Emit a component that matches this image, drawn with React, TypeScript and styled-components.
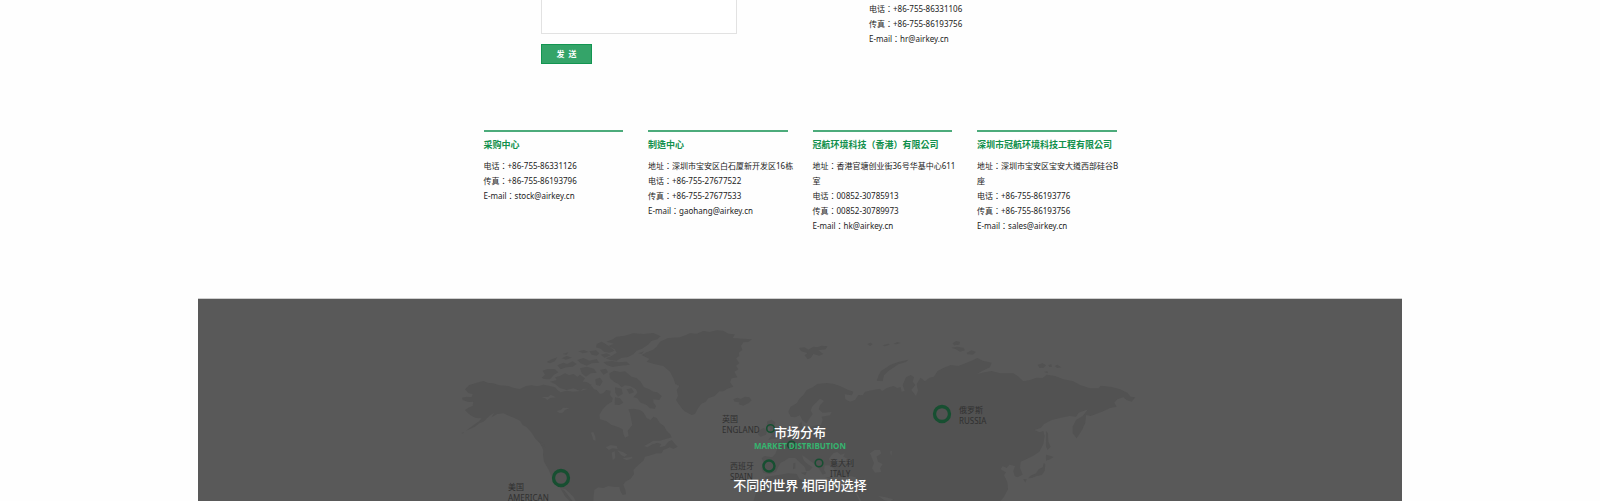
import React from "react";
import styled, { createGlobalStyle } from "styled-components";

const GlobalStyle = createGlobalStyle`
  * { box-sizing: border-box; }
  body {
    margin: 0;
    background: #fefefe;
    color: #222;
    font-family: "Noto Sans", "Noto Sans CJK SC", sans-serif;
    font-size: 8px;
    line-height: 15px;
  }
`;

const Page = styled.div`
  display: flex;
  flex-direction: column;
  min-height: 100vh;
`;

const ContactTop = styled.section`
  display: flex;
  justify-content: space-between;
  width: 100%;
  max-width: 518px;
  margin: 0 auto;
  min-height: 64px;
`;

const Form = styled.form`
  display: flex;
  flex-direction: column;
  align-items: flex-start;
  gap: 10px;
`;

const Message = styled.textarea`
  display: block;
  width: 196px;
  height: 34px;
  border: 1px solid #e2e2e2;
  border-top: 0;
  background: #fff;
  resize: none;
  outline: none;
`;

const SendButton = styled.button`
  width: 51px;
  height: 20px;
  padding: 0;
  border: 1px solid #129551;
  background: #34a469;
  color: #fff;
  font: inherit;
  font-weight: 700;
  line-height: 18px;
  white-space: pre;
`;

/* The Traditional Chinese face sets the full-width colon in the middle of its cell. */
const Lines = styled.address`
  font-family: "Noto Sans", "Noto Sans CJK TC", "Noto Sans CJK SC", sans-serif;
  font-style: normal;
  white-space: nowrap;
`;

const HrLines = styled(Lines)`
  width: 190px;
  padding-top: 1px;
`;

const Line = styled.div``;

const Offices = styled.section`
  display: grid;
  grid-template-columns: repeat(4, 1fr);
  column-gap: 25px;
  width: 100%;
  max-width: 633px;
  margin: 66px auto 65px;
`;

const Office = styled.article`
  min-width: 0;
  border-top: 2px solid #4cab7b;
`;

const OfficeName = styled.h3`
  margin: 5px 0 6px;
  color: #11904c;
  font-family: "Noto Sans", "Noto Sans CJK TC", "Noto Sans CJK SC", sans-serif;
  font-size: 9px;
  line-height: 15px;
  font-weight: 700;
  white-space: nowrap;
`;

const Market = styled.section`
  flex: 1;
  width: 100%;
  max-width: 1204px;
  margin: 0 auto;
  border-top: 1px solid #cfcfcf;
  background: #595959;
  overflow: hidden;
`;

const MapCanvas = styled.div`
  position: relative;
  width: 680px;
  margin: 0 auto;
`;

const MapArt = styled.svg`
  display: block;
  width: 100%;
  height: auto;
`;

const PinLabel = styled.div<{ $x: number; $y: number }>`
  position: absolute;
  left: ${(p) => p.$x}px;
  top: ${(p) => p.$y}px;
  color: #303030;
  line-height: 11px;
  white-space: nowrap;
`;

const Caption = styled.div`
  position: absolute;
  inset: 0;
  padding-top: 125px;
  text-align: center;
  color: #fff;
`;

const CaptionTitle = styled.h2`
  margin: 0;
  font-size: 13px;
  line-height: 16px;
  font-weight: 500;
`;

const CaptionSub = styled.p`
  margin: 0;
  color: #35b56f;
  font-family: "Open Sans", "Noto Sans", sans-serif;
  font-weight: 700;
  line-height: 12px;
`;

const Slogan = styled.p`
  margin: 25px 0 0;
  font-size: 13px;
  line-height: 16px;
  font-weight: 500;
`;

const offices = [
  {
    name: "采购中心",
    lines: ["电话：+86-755-86331126", "传真：+86-755-86193796", "E-mail：stock@airkey.cn"],
  },
  {
    name: "制造中心",
    lines: [
      "地址：深圳市宝安区白石厦新开发区16栋",
      "电话：+86-755-27677522",
      "传真：+86-755-27677533",
      "E-mail：gaohang@airkey.cn",
    ],
  },
  {
    name: "冠航环境科技（香港）有限公司",
    lines: [
      "地址：香港官塘创业街36号华基中心611",
      "室",
      "电话：00852-30785913",
      "传真：00852-30789973",
      "E-mail：hk@airkey.cn",
    ],
  },
  {
    name: "深圳市冠航环境科技工程有限公司",
    lines: [
      "地址：深圳市宝安区宝安大道西部硅谷B",
      "座",
      "电话：+86-755-86193776",
      "传真：+86-755-86193756",
      "E-mail：sales@airkey.cn",
    ],
  },
];

const pins = [
  { zh: "美国", en: "AMERICAN", x: 48, y: 182 },
  { zh: "英国", en: "ENGLAND", x: 262, y: 114 },
  { zh: "西班牙", en: "SPAIN", x: 270, y: 161 },
  { zh: "意大利", en: "ITALY", x: 370, y: 158 },
  { zh: "俄罗斯", en: "RUSSIA", x: 499, y: 105 },
];

const rings = [
  { cx: 561, cy: 478, r: 7.5, w: 3.3 },
  { cx: 942, cy: 414, r: 7.5, w: 3.3 },
  { cx: 769, cy: 466, r: 5.5, w: 2.4 },
  { cx: 770.5, cy: 428.5, r: 3.8, w: 1.6 },
  { cx: 819, cy: 463, r: 3.8, w: 1.6 },
  { cx: 791.5, cy: 445, r: 3.8, w: 1.6 },
];

const WorldMap = () => (
  <MapArt viewBox="460 299 680 202" aria-hidden="true">
    {/* North America */}
    <g transform="translate(440 310) scale(0.33333)" fill="#525252">
      <path d="M75 238L88 225L108 219L130 213L145 219L160 220L178 226L205 228L222 234L240 237L258 228L275 226L292 229L310 224L330 228L345 232L352 240L362 247L380 242L400 245L422 243L440 238L447 230L455 228L462 238L470 240L480 252L490 250L498 240L512 242L510 255L518 265L516 275L500 285L488 298L478 315L480 328L498 333L515 345L534 351L548 358L550 372L555 383L566 378L563 362L577 345L573 325L570 310L565 298L580 296L600 300L610 307L620 324L632 330L640 320L650 324L660 340L672 348L680 362L690 372L695 382L680 386L660 392L640 392L628 400L640 403L652 398L664 402L658 412L675 408L684 396L695 390L703 400L713 410L700 417L690 412L670 420L665 430L650 430L632 436L615 440L610 452L598 462L588 472L580 480L582 492L572 506L556 515L550 524L556 540L558 553L548 555L541 543L538 531L520 530L505 528L490 534L475 532L463 540L461 556L460 575L408 575L400 560L385 545L375 537L362 535L350 515L335 500L325 478L312 455L309 435L310 420L300 400L285 385L275 368L260 352L248 345L240 332L225 325L208 318L190 310L172 312L155 322L162 308L148 318L130 335L118 340L105 350L78 362L100 346L117 334L125 325L108 324L95 318L84 310L75 300L88 292L98 288L100 275L85 276L68 270L66 263L80 260L95 262L98 252L86 250Z" />
      <path d="M362 536L372 540L382 553L398 574L390 574L376 560Z M295 392L310 400L317 412L305 406Z M63 370L72 366L70 370Z" />
      <path d="M508 190L522 182L540 186L555 184L575 200L590 204L602 215L612 232L628 238L640 245L652 247L665 258L658 270L640 268L640 277L648 288L645 296L630 295L620 285L600 277L592 265L580 262L592 248L588 238L570 228L555 226L545 232L535 222L522 215L510 205Z" />
      <path d="M345 202L360 198L375 190L388 196L400 192L412 200L420 194L435 205L428 215L440 216L455 225L444 236L430 236L420 243L400 235L380 240L360 234L345 222L330 215L350 210Z" />
      <path d="M308 182L322 177L345 178L355 187L342 194L330 208L312 207L305 203L315 194Z M320 156L335 148L352 142L345 153L330 160Z M352 166L370 158L382 162L398 154L410 162L398 170L378 172L362 178Z M365 145L380 138L396 143L378 149Z" />
      <path d="M500 95L518 88L530 80L555 77L580 70L610 72L640 69L662 79L652 88L634 93L626 103L606 116L590 122L580 133L562 142L545 143L530 152L510 150L498 145L515 138L530 128L524 118L505 108L522 101Z" />
      <path d="M470 102L485 95L497 102L511 112L524 122L508 128L492 125L482 116L468 112Z M490 156L515 153L538 157L560 155L570 164L540 167L518 171L500 165Z M412 150L430 144L448 152L470 147L478 158L455 160L440 167L422 160Z M420 175L440 170L462 176L470 188L452 190L438 200L425 190Z M466 208L480 203L488 214L480 228L468 224Z M480 180L498 176L504 187L490 194Z M415 124L432 120L446 126L428 130Z M448 124L468 121L478 130L470 137L455 134Z M482 134L500 130L512 136L494 143Z M368 132L385 127L380 134Z" />
      <path d="M525 262L540 265L550 278L538 285L524 284Z M560 238L575 235L582 247L568 252Z M525 232L545 236L548 252L534 260L526 248Z M595 130L612 124L605 132Z" />
      <path fill="#595959" d="M303 262L325 260L332 254L348 262L330 264L322 271L316 265Z M350 303L362 300L370 293L390 294L375 300L368 308L358 309Z M453 368L460 366L466 380L467 392L460 390Z M497 412L512 405L530 408L533 417L518 415L506 420Z M515 428L524 423L526 445L518 450Z M532 421L550 427L562 434L554 440L543 435Z M548 445L576 440L578 445L560 451Z M612 408L630 398L640 401L622 412Z" />
    </g>
    {/* Greenland, Europe and the north of Africa */}
    <g transform="translate(680 310) scale(0.33333)" fill="#525252">
      <path d="M0 82L16 76L30 70L50 71L70 63L88 66L110 61L130 62L145 71L165 73L158 84L188 86L216 88L205 96L190 97L183 108L187 120L176 128L178 138L168 145L178 160L168 167L175 178L163 185L172 202L155 205L150 217L160 230L142 236L130 244L118 244L104 258L85 265L76 276L64 281L54 295L45 312L35 315L25 310L14 304L5 295L-4 282L-12 270L-6 257L-10 240L-2 228L-14 222L-20 205L-30 185L-50 168L-78 162L-100 155L-92 147L-115 135L-100 127L-82 120L-70 110L-60 95L-36 84Z" />
      <path d="M160 268L172 263L182 267L195 260L208 262L215 271L205 280L190 287L176 283L178 277L164 275Z M357 114L374 112L385 119L400 110L412 112L425 107L443 109L436 118L415 121L430 132L418 137L400 132L393 143L383 148L374 136L382 129L364 124Z M562 102L572 98L578 103L570 108Z M608 106L625 101L630 104L614 109Z M640 102L652 96L662 99L650 103Z" />
      <path d="M590 212L596 196L603 183L618 173L630 165L655 156L685 149L678 156L655 163L640 173L624 184L612 196L608 214Z" />
      <path d="M325 305L332 290L350 280L358 266L370 255L380 240L398 232L412 222L440 219L462 222L480 228L500 238L520 245L516 256L494 253L496 268L510 275L525 270L535 255L548 256L555 245L580 240L600 236L606 244L620 234L640 228L652 234L662 231L665 245L674 242L668 225L678 202L692 195L702 202L698 215L706 225L694 240L708 258L714 242L710 222L722 203L735 214L748 203L762 200L772 184L790 174L812 165L835 168L856 160L875 152L892 144L908 152L935 158L930 172L908 182L890 192L915 187L935 183L960 190L1000 190L1016 200L1030 214L1050 210L1070 203L1088 204L1100 194L1125 198L1150 208L1180 214L1200 225L1230 235L1256 235L1262 227L1295 231L1320 238L1342 248L1352 260L1366 262L1355 275L1340 270L1330 262L1312 268L1303 278L1310 290L1290 294L1270 304L1248 312L1232 318L1218 315L1216 338L1206 360L1190 385L1178 370L1178 350L1188 330L1208 318L1224 298L1210 303L1196 308L1188 320L1168 318L1140 324L1115 330L1092 342L1082 354L1064 360L1078 367L1090 363L1094 378L1090 402L1078 425L1060 437L1040 447L1022 455L1020 474L1028 494L1012 502L1004 498L1000 484L1005 468L988 464L980 474L968 468L962 478L978 487L972 496L982 515L984 538L972 560L960 575L220 575L228 550L240 528L254 512L256 500L275 498L300 494L325 490L350 492L358 506L378 514L390 525L402 520L418 530L445 536L475 535L502 540L518 545L530 520L528 502L510 498L490 502L474 495L464 478L448 466L434 466L432 480L438 490L428 494L418 478L408 464L390 452L374 440L366 436L372 452L386 464L398 472L388 482L378 484L374 470L360 458L346 444L326 444L314 452L302 458L294 472L288 486L268 492L250 488L245 475L250 456L245 444L254 438L276 442L286 432L292 415L276 404L290 396L302 394L312 382L330 372L340 364L352 358L358 342L364 335L367 350L384 352L410 346L423 345L428 330L425 320L450 316L455 306L428 308L416 298L420 286L432 273L420 266L408 278L396 290L392 302L398 312L388 326L380 340L368 332L360 316L345 322L332 320Z" />
      <path d="M262 334L275 329L286 337L282 350L292 360L296 372L306 378L298 386L278 386L264 390L276 376L268 366L272 354L260 348Z M236 362L250 354L262 360L258 374L242 380L234 374Z M340 460L346 458L346 475L339 478Z M362 488L380 486L376 496Z M435 502L455 502L450 507Z M360 352L372 356L365 364Z" />
      <path fill="#595959" d="M570 430L584 420L600 420L604 430L590 440L594 455L608 462L600 475L604 486L585 488L576 475L582 460Z M446 446L460 430L472 426L482 434L495 430L490 440L516 452L510 462L480 458L455 461Z M630 425L636 422L634 438Z M525 545L534 555L545 575L539 575Z M595 558L618 562L640 568L628 575L612 570Z M480 540L500 540L480 549Z" />
    </g>
    {/* Islands of the Russian Arctic and Japan */}
    <g transform="translate(900 310) scale(0.33333)" fill="#525252">
      <path d="M158 100L168 93L180 96L178 104L162 106Z M154 113L172 110L190 113L195 121L180 125L168 118Z M200 128L215 121L228 126L218 134L203 133Z M413 164L428 160L438 166L430 174L418 173Z M445 165L454 163L456 170L448 171Z M464 168L472 164L484 172L472 174Z M432 186L442 184L444 190Z" />
      <path d="M438 362L444 370L445 395L452 410L443 420L438 410Z M438 434L450 437L461 441L450 448L438 452Z M432 458L436 464L434 482L426 495L410 498L395 504L385 505L390 498L408 490L416 478L428 472Z M370 507L380 508L376 518Z" />
    </g>
    <g fill="none" stroke="#174f31">
      {rings.map((r) => (
        <circle key={`${r.cx}-${r.cy}`} cx={r.cx} cy={r.cy} r={r.r} strokeWidth={r.w} />
      ))}
    </g>
  </MapArt>
);

export default function App() {
  return (
    <>
      <GlobalStyle />
      <Page>
        <ContactTop>
          <Form onSubmit={(e) => e.preventDefault()}>
            <Message aria-label="留言" />
            <SendButton type="submit">发  送</SendButton>
          </Form>
          <HrLines>
            <Line>电话：+86-755-86331106</Line>
            <Line>传真：+86-755-86193756</Line>
            <Line>E-mail：hr@airkey.cn</Line>
          </HrLines>
        </ContactTop>
        <Offices>
          {offices.map((o) => (
            <Office key={o.name}>
              <OfficeName>{o.name}</OfficeName>
              <Lines>
                {o.lines.map((l) => (
                  <Line key={l}>{l}</Line>
                ))}
              </Lines>
            </Office>
          ))}
        </Offices>
        <Market>
          <MapCanvas>
            <WorldMap />
            {pins.map((p) => (
              <PinLabel key={p.en} $x={p.x} $y={p.y}>
                {p.zh}
                <br />
                {p.en}
              </PinLabel>
            ))}
            <Caption>
              <CaptionTitle>市场分布</CaptionTitle>
              <CaptionSub>MARKET DISTRIBUTION</CaptionSub>
              <Slogan>不同的世界 相同的选择</Slogan>
            </Caption>
          </MapCanvas>
        </Market>
      </Page>
    </>
  );
}
